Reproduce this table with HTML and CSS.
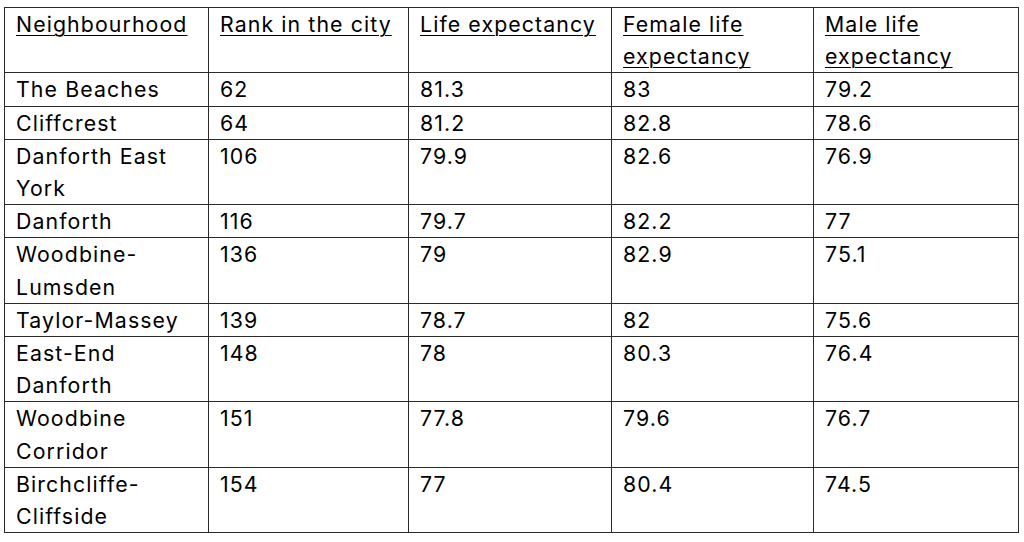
FILE: index.html
```html
<!DOCTYPE html>
<html lang="en">
<head>
<meta charset="utf-8">
<title>Life expectancy by neighbourhood</title>
<link rel="stylesheet" href="styles.css">
</head>
<body>
<main class="page">
  <table class="life-table">
    <colgroup>
      <col class="c1">
      <col class="c2">
      <col class="c3">
      <col class="c4">
      <col class="c5">
    </colgroup>
    <thead>
      <tr>
        <th><span class="u">Neighbourhood</span></th>
        <th><span class="u">Rank in the city</span></th>
        <th><span class="u">Life expectancy</span></th>
        <th><span class="u">Female life expectancy</span></th>
        <th><span class="u">Male life expectancy</span></th>
      </tr>
    </thead>
    <tbody>
      <tr><td>The Beaches</td><td>62</td><td>81.3</td><td>83</td><td>79.2</td></tr>
      <tr><td>Cliffcrest</td><td>64</td><td>81.2</td><td>82.8</td><td>78.6</td></tr>
      <tr><td>Danforth East York</td><td>106</td><td>79.9</td><td>82.6</td><td>76.9</td></tr>
      <tr><td>Danforth</td><td>116</td><td>79.7</td><td>82.2</td><td>77</td></tr>
      <tr><td>Woodbine-Lumsden</td><td>136</td><td>79</td><td>82.9</td><td>75.1</td></tr>
      <tr><td>Taylor-Massey</td><td>139</td><td>78.7</td><td>82</td><td>75.6</td></tr>
      <tr><td>East-End Danforth</td><td>148</td><td>78</td><td>80.3</td><td>76.4</td></tr>
      <tr><td>Woodbine Corridor</td><td>151</td><td>77.8</td><td>79.6</td><td>76.7</td></tr>
      <tr><td>Birchcliffe-Cliffside</td><td>154</td><td>77</td><td>80.4</td><td>74.5</td></tr>
    </tbody>
  </table>
</main>
</body>
</html>
```

FILE: styles.css
```css
html, body {
  margin: 0;
  padding: 0;
  background: #ffffff;
}

.page {
  padding: 7px 0 0 4px;
}

.life-table {
  width: 1015px;
  border-collapse: collapse;
  table-layout: fixed;
  font-family: "Inter", "Liberation Sans", sans-serif;
  font-size: 21.3px;
  letter-spacing: 1.1px;
  color: #000000;
}

.c1 { width: 204px; }
.c2 { width: 200px; }
.c3 { width: 203px; }
.c4 { width: 202px; }
.c5 { width: 205px; }

.life-table th,
.life-table td {
  border: 1px solid #2a2a2a;
  padding: 0 4px 0 11px;
  line-height: 32.2px;
  text-align: left;
  vertical-align: top;
  font-weight: normal;
}

.u {
  text-decoration: underline;
  text-decoration-thickness: 1px;
  text-underline-offset: 3px;
}
```
